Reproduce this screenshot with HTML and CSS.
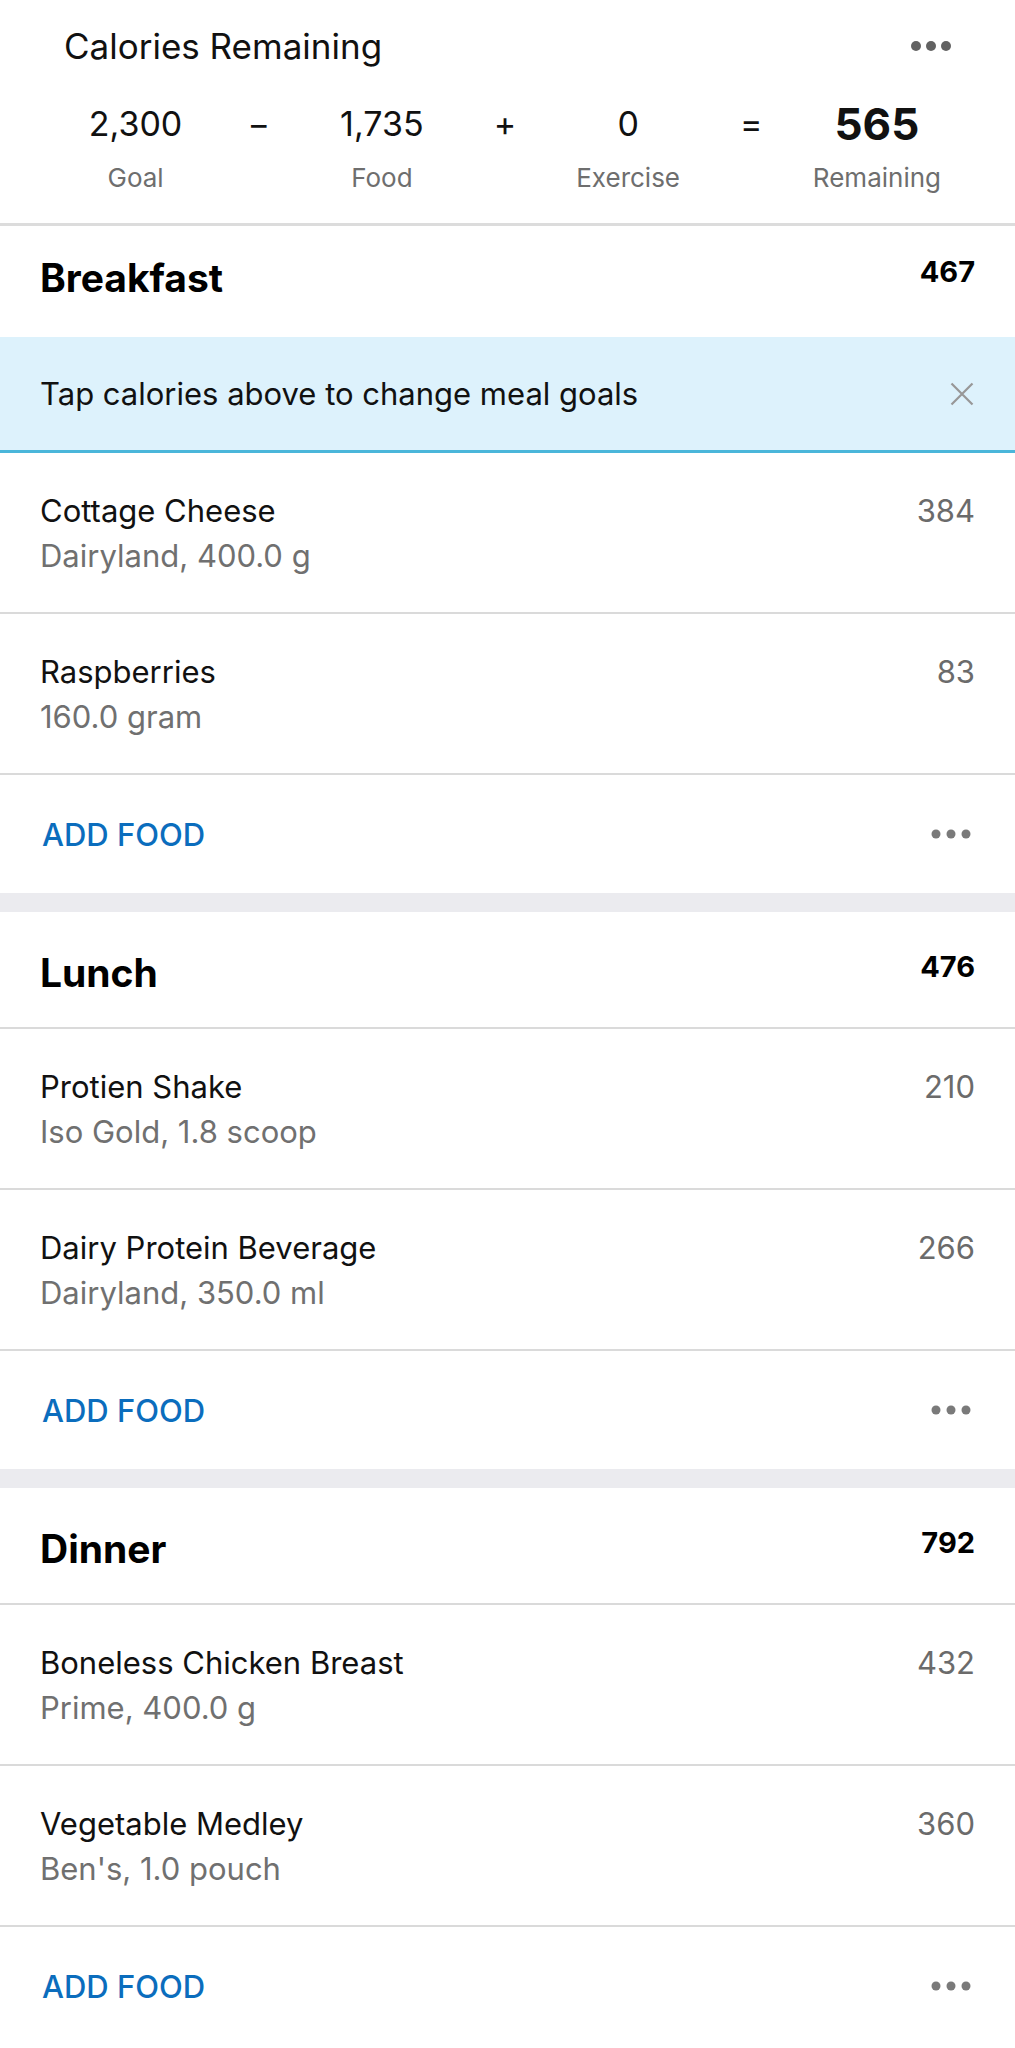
FILE: index.html
```html
<!DOCTYPE html>
<html lang="en">
<head>
    <meta charset="UTF-8">
    <meta name="viewport" content="width=device-width, initial-scale=1.0">
    <title>Diary</title>
    <link rel="stylesheet" href="styles.css">
</head>
<body>

<div class="diary">

    <!-- Ringkasan kalori -->
    <div class="summary">
        <div class="summary-top">
            <span class="summary-title">Calories Remaining</span>
            <svg class="dots" width="40" height="12" viewBox="0 0 40 12">
                <circle cx="5" cy="6" r="5"/><circle cx="20" cy="6" r="5"/><circle cx="35" cy="6" r="5"/>
            </svg>
        </div>
        <div class="equation">
            <div class="eq-item"><div class="eq-num">2,300</div><div class="eq-label">Goal</div></div>
            <div class="eq-op">&minus;</div>
            <div class="eq-item"><div class="eq-num">1,735</div><div class="eq-label">Food</div></div>
            <div class="eq-op">+</div>
            <div class="eq-item"><div class="eq-num">0</div><div class="eq-label">Exercise</div></div>
            <div class="eq-op">=</div>
            <div class="eq-item"><div class="eq-num total">565</div><div class="eq-label">Remaining</div></div>
        </div>
    </div>

    <!-- Breakfast -->
    <div class="meal">
        <div class="meal-head first">
            <span class="meal-title">Breakfast</span>
            <span class="meal-cal">467</span>
        </div>
        <div class="tip">
            <span>Tap calories above to change meal goals</span>
            <svg width="24" height="24" viewBox="0 0 24 24">
                <path d="M1.5 1.5 L22.5 22.5 M22.5 1.5 L1.5 22.5" stroke="#979797" stroke-width="2.2" fill="none"/>
            </svg>
        </div>
        <div class="food">
            <div class="food-info">
                <div class="food-name">Cottage Cheese</div>
                <div class="food-sub">Dairyland, 400.0 g</div>
            </div>
            <div class="food-cal">384</div>
        </div>
        <div class="food">
            <div class="food-info">
                <div class="food-name">Raspberries</div>
                <div class="food-sub">160.0 gram</div>
            </div>
            <div class="food-cal">83</div>
        </div>
        <div class="add-row">
            <span class="add-food">ADD FOOD</span>
            <svg class="dots small" width="40" height="10" viewBox="0 0 40 10">
                <circle cx="5" cy="5" r="4.5"/><circle cx="20" cy="5" r="4.5"/><circle cx="35" cy="5" r="4.5"/>
            </svg>
        </div>
    </div>

    <div class="band"></div>

    <!-- Lunch -->
    <div class="meal">
        <div class="meal-head">
            <span class="meal-title">Lunch</span>
            <span class="meal-cal">476</span>
        </div>
        <div class="food">
            <div class="food-info">
                <div class="food-name">Protien Shake</div>
                <div class="food-sub">Iso Gold, 1.8 scoop</div>
            </div>
            <div class="food-cal">210</div>
        </div>
        <div class="food">
            <div class="food-info">
                <div class="food-name">Dairy Protein Beverage</div>
                <div class="food-sub">Dairyland, 350.0 ml</div>
            </div>
            <div class="food-cal">266</div>
        </div>
        <div class="add-row">
            <span class="add-food">ADD FOOD</span>
            <svg class="dots small" width="40" height="10" viewBox="0 0 40 10">
                <circle cx="5" cy="5" r="4.5"/><circle cx="20" cy="5" r="4.5"/><circle cx="35" cy="5" r="4.5"/>
            </svg>
        </div>
    </div>

    <div class="band"></div>

    <!-- Dinner -->
    <div class="meal">
        <div class="meal-head">
            <span class="meal-title">Dinner</span>
            <span class="meal-cal">792</span>
        </div>
        <div class="food">
            <div class="food-info">
                <div class="food-name">Boneless Chicken Breast</div>
                <div class="food-sub">Prime, 400.0 g</div>
            </div>
            <div class="food-cal">432</div>
        </div>
        <div class="food">
            <div class="food-info">
                <div class="food-name">Vegetable Medley</div>
                <div class="food-sub">Ben's, 1.0 pouch</div>
            </div>
            <div class="food-cal">360</div>
        </div>
        <div class="add-row">
            <span class="add-food">ADD FOOD</span>
            <svg class="dots small" width="40" height="10" viewBox="0 0 40 10">
                <circle cx="5" cy="5" r="4.5"/><circle cx="20" cy="5" r="4.5"/><circle cx="35" cy="5" r="4.5"/>
            </svg>
        </div>
    </div>

</div>

</body>
</html>
```

FILE: styles.css
```css
body {
    font-family: Inter, "Noto Sans", sans-serif;
    margin: 0;
    padding: 0;
    background-color: white;
    color: #111;
}
.diary {
    width: 100%;
}

/* ringkasan atas */
.summary {
    height: 226px;
    border-bottom: 3px solid #dcdcdc;
    padding-top: 26px;
    box-sizing: border-box;
}
.summary-top {
    display: flex;
    justify-content: space-between;
    align-items: center;
    padding: 0 64px 0 64px;
    height: 40px;
}
.summary-title {
    font-size: 35px;
    line-height: 40px;
}
.dots {
    fill: #626262;
}
.dots.small {
    fill: #7a7a7a;
}
.equation {
    display: grid;
    grid-template-columns: repeat(7, 1fr);
    padding: 0 74px;
    margin-top: 34px;
    text-align: center;
}
.eq-num, .eq-op {
    font-size: 34px;
    line-height: 48px;
}
.eq-num.total {
    font-size: 44px;
    font-weight: 700;
}
.eq-label {
    font-size: 26px;
    line-height: 34px;
    color: #6e6e6e;
    margin-top: 13px;
}

/* bagian makan */
.meal-head {
    display: flex;
    justify-content: space-between;
    align-items: flex-start;
    height: 117px;
    padding: 39px 40px 0;
    box-sizing: border-box;
    border-bottom: 2px solid #dadada;
}
.meal-head.first {
    height: 111px;
    padding-top: 30px;
    border-bottom: none;
}
.meal-title {
    font-size: 39px;
    font-weight: 700;
    line-height: 44px;
    color: #000;
}
.meal-cal {
    font-size: 29px;
    font-weight: 700;
    line-height: 30px;
    margin-top: 1px;
    color: #000;
}
.tip {
    display: flex;
    justify-content: space-between;
    align-items: center;
    height: 116px;
    box-sizing: border-box;
    padding: 0 41px 0 40px;
    background-color: #ddf2fc;
    border-bottom: 3px solid #4ab6da;
    font-size: 31px;
}
.food {
    display: flex;
    justify-content: space-between;
    align-items: flex-start;
    padding: 35px 40px 34px;
    border-bottom: 2px solid #dadada;
    font-size: 31px;
    line-height: 45px;
}
.food-name {
    color: #111;
}
.food-sub {
    color: #707070;
}
.food-cal {
    color: #6b6b6b;
}
.add-row {
    display: flex;
    justify-content: space-between;
    align-items: center;
    height: 118px;
    padding: 0 44px 0 42px;
}
.add-food {
    font-size: 31px;
    font-weight: 500;
    color: #0b6dbd;
}
.band {
    height: 19px;
    background-color: #ebebef;
}
```
